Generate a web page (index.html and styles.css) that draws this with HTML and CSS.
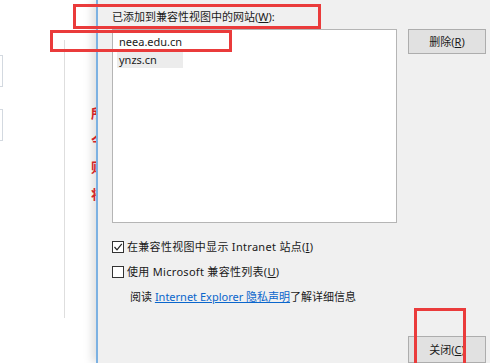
FILE: index.html
```html
<!DOCTYPE html>
<html lang="zh-CN">
<head>
<meta charset="utf-8">
<title>兼容性视图设置</title>
<link rel="stylesheet" href="styles.css">
</head>
<body>
<div class="screen">
  <div class="page">
    <div class="inputs">
      <div class="input"></div>
      <div class="input"></div>
    </div>
    <div class="divider"></div>
    <div class="redcol">
      <span>所</span>
      <span>今</span>
      <span>则</span>
      <span>将</span>
    </div>
  </div>

  <div class="dialog">
    <div class="label">已添加到兼容性视图中的网站(<u>W</u>):</div>
    <div class="list-row">
      <div class="listbox">
        <div class="item">neea.edu.cn</div>
        <div class="item sel">ynzs.cn</div>
      </div>
      <button class="btn">删除(<u>R</u>)</button>
    </div>
    <div class="checks">
      <div class="check-row">
        <span class="box">
          <svg width="10" height="10" viewBox="0 0 10 10"><polyline points="1.5,5 4,7.8 8.8,1.8" fill="none" stroke="#222" stroke-width="1.2"/></svg>
        </span>
        <span class="ctext">在兼容性视图中显示 Intranet 站点(<u>I</u>)</span>
      </div>
      <div class="check-row">
        <span class="box"></span>
        <span class="ctext">使用 Microsoft 兼容性列表(<u>U</u>)</span>
      </div>
      <div class="read">阅读 <a class="link" href="#">Internet Explorer 隐私声明</a>了解详细信息</div>
    </div>
    <div class="footer">
      <button class="btn">关闭(<u>C</u>)</button>
    </div>
  </div>

  <div class="mark mark1"></div>
  <div class="mark mark2"></div>
  <div class="mark mark3"></div>
</div>
</body>
</html>
```
FILE: styles.css
```css
html, body {
  margin: 0;
  padding: 0;
  background: #ffffff;
}

.screen {
  position: relative;
  width: 490px;
  height: 363px;
  overflow: hidden;
  font-family: "Noto Sans", "Noto Sans CJK SC", sans-serif;
  font-size: 11px;
  color: #1a1a1a;
}

/* background page */
.page {
  display: flex;
  height: 363px;
}

.inputs {
  flex: none;
  width: 3px;
  padding-top: 55px;
  display: flex;
  flex-direction: column;
  gap: 22px;
}

.input {
  width: 23px;
  height: 32px;
  margin-left: -20px;
  border: 1px solid #d3d9e0;
  box-sizing: border-box;
  background: #fff;
}

.divider {
  flex: none;
  margin-left: 61px;
  margin-top: 40px;
  width: 1px;
  height: 278px;
  background: #dedede;
}

.redcol {
  flex: none;
  margin-left: 26px;
  padding-top: 99px;
  display: flex;
  flex-direction: column;
  color: #e5262b;
  font-weight: bold;
  font-size: 13px;
  line-height: 27px;
  font-family: "Noto Sans CJK SC", sans-serif;
}

/* dialog window */
.dialog {
  position: absolute;
  left: 96px;
  top: 0;
  width: 394px;
  height: 363px;
  box-sizing: border-box;
  background: #f0f0f0;
  border-left: 2px solid #7cb1e2;
  padding: 9px 0 0 14px;
  box-shadow: -4px 0 9px rgba(0, 0, 0, 0.13);
}

.label {
  height: 16px;
  line-height: 16px;
}

.list-row {
  margin-top: 4px;
  display: flex;
  gap: 11px;
  align-items: flex-start;
}

.listbox {
  width: 285px;
  height: 194px;
  box-sizing: border-box;
  background: #fff;
  border: 1px solid #b5b5b5;
  padding: 4px 0 0 4px;
}

.item {
  height: 16px;
  line-height: 16px;
  padding: 0 2px;
  margin-bottom: 2px;
  width: 66px;
  box-sizing: border-box;
  font-size: 11px;
}

.item.sel {
  background: #ececec;
}

.btn {
  width: 78px;
  height: 25px;
  box-sizing: border-box;
  background: #e1e1e1;
  border: 1px solid #adadad;
  font-family: "Noto Sans", "Noto Sans CJK SC", sans-serif;
  font-size: 11px;
  color: #1a1a1a;
  padding: 0;
  margin: 0;
  line-height: 23px;
}

.btn u, .label u, .check-row u {
  text-decoration: underline;
}

.checks {
  margin-top: 17px;
}

.check-row {
  display: flex;
  align-items: center;
  gap: 3px;
  height: 14px;
  line-height: 14px;
  margin-bottom: 11px;
}

.ctext {
  letter-spacing: 0.3px;
}

.box {
  flex: none;
  width: 12px;
  height: 12px;
  box-sizing: border-box;
  border: 1px solid #333;
  background: #fff;
  display: flex;
  align-items: center;
  justify-content: center;
}

.read {
  padding-left: 18px;
  height: 14px;
  line-height: 14px;
}

.link {
  color: #0a66cc;
  text-decoration: underline;
}

.footer {
  margin-top: 32px;
  display: flex;
  justify-content: flex-end;
  padding-right: 4px;
}

.footer .btn {
  height: 27px;
}

/* red annotation boxes */
.mark {
  position: absolute;
  border: 3px solid #ea3b3b;
  box-sizing: border-box;
}

.mark1 {
  left: 73px;
  top: 4px;
  width: 248px;
  height: 25px;
}

.mark2 {
  left: 50px;
  top: 30px;
  width: 182px;
  height: 22px;
}

.mark3 {
  left: 414px;
  top: 308px;
  width: 52px;
  height: 60px;
}
```
